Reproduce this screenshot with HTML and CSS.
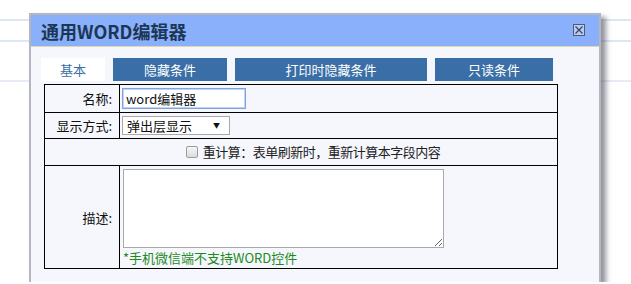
FILE: index.html
```html
<!DOCTYPE html>
<html lang="zh-CN">
<head>
    <meta charset="UTF-8">
    <meta name="viewport" content="width=device-width, initial-scale=1.0">
    <title>通用WORD编辑器</title>
    <link rel="stylesheet" href="styles.css">
</head>
<body>

    <div class="dialog">
        <div class="titlebar">
            <span class="title">通用WORD编辑器</span>
            <span class="close">
                <svg width="12" height="12" viewBox="0 0 12 12">
                    <rect x="0.5" y="0.5" width="11" height="11" fill="#b8ccf6" stroke="#505a78"/>
                    <path d="M2.5 2.5 L9.5 9.5 M9.5 2.5 L2.5 9.5" stroke="#3c4460" stroke-width="1.2"/>
                </svg>
            </span>
        </div>

        <div class="content">
            <div class="tabs">
                <span class="tab active">基本</span>
                <span class="tab w1">隐藏条件</span>
                <span class="tab w2">打印时隐藏条件</span>
                <span class="tab w3">只读条件</span>
            </div>

            <table class="form">
                <tr class="r1">
                    <td class="label">名称:</td>
                    <td><input type="text" class="name" value="word编辑器"></td>
                </tr>
                <tr class="r2">
                    <td class="label">显示方式:</td>
                    <td>
                        <div class="select">
                            <span>弹出层显示</span>
                            <span class="arrow">▼</span>
                        </div>
                    </td>
                </tr>
                <tr class="r3">
                    <td colspan="2" class="check">
                        <label><input type="checkbox" class="box">重计算：表单刷新时，重新计算本字段内容</label>
                    </td>
                </tr>
                <tr class="r4">
                    <td class="label">描述:</td>
                    <td class="desc">
                        <textarea></textarea>
                        <div class="note">*手机微信端不支持WORD控件</div>
                    </td>
                </tr>
            </table>
        </div>
    </div>

</body>
</html>
```

FILE: styles.css
```css
body {
    margin: 0;
    font-family: "Microsoft YaHei", "Noto Sans CJK SC", sans-serif;
    font-size: 13px;
    color: #222;
    background:
        linear-gradient(#dfe6f3, #dfe6f3) 0 19px / 100% 2px no-repeat,
        linear-gradient(#dfe6f3, #dfe6f3) 0 40px / 100% 2px no-repeat,
        linear-gradient(#e6ebf5, #e6ebf5) 0 80px / 100% 2px no-repeat,
        #fff;
    overflow: hidden;
}
.dialog {
    margin: 13px 0 0 29px;
    width: 568px;
    height: 267px;
    border: 2px solid #b6b6be;
    border-bottom: none;
    background: #f5f7fc;
    box-shadow: 5px 4px 5px rgba(60, 60, 80, 0.55);
}
.titlebar {
    height: 31px;
    background: #8ab0fb;
    border-bottom: 1px solid #ddd8b0;
    display: flex;
    align-items: center;
    justify-content: space-between;
    padding: 0 14px 0 10px;
}
.title {
    font-size: 18px;
    font-weight: bold;
    color: #1c3656;
    line-height: 20px;
}
.close {
    display: flex;
    margin-top: -2px;
}
.content {
    padding: 11px 0 0 10px;
}
.tabs {
    display: flex;
    gap: 8px;
    height: 23px;
}
.tab {
    display: flex;
    align-items: center;
    justify-content: center;
    background: #3a6ea6;
    color: #fff;
    line-height: 23px;
}
.tab.active {
    width: 64px;
    background: #fff;
    color: #3a6ea6;
}
.tab.w1 { width: 114px; }
.tab.w2 { width: 192px; }
.tab.w3 { width: 118px; }
.form {
    margin: 3px 0 0 3px;
    width: 514px;
    border-collapse: collapse;
    border: 1px solid #000;
}
.form td {
    border: 1px solid #000;
    padding: 0 0 0 2px;
    line-height: 17px;
}
.form td.label {
    width: 67px;
    padding: 0 7px 0 0;
    text-align: right;
    color: #111;
}
.r1 td { height: 27px; }
.r2 td { height: 25px; }
.r3 td { height: 26px; }
.r4 td { height: 102px; }
.name {
    display: block;
    box-sizing: border-box;
    width: 124px;
    height: 21px;
    margin: 0;
    padding: 0 3px;
    border: 1px solid #7da4dc;
    box-shadow: 0 0 0 1px rgba(150, 185, 235, 0.6) inset;
    font: 13px "Microsoft YaHei", "Noto Sans CJK SC", sans-serif;
    color: #111;
    outline: none;
}
.select {
    box-sizing: border-box;
    width: 108px;
    height: 19px;
    border: 1px solid #a9a9a9;
    background: #fff;
    display: flex;
    align-items: center;
    justify-content: space-between;
    padding: 0 9px 0 4px;
    color: #111;
}
.arrow {
    font-size: 7px;
    color: #111;
}
.check {
    text-align: center;
}
.check label {
    display: inline-flex;
    align-items: center;
    gap: 5px;
    margin-left: 22px;
    letter-spacing: -0.5px;
}
.box {
    appearance: none;
    width: 12px;
    height: 12px;
    margin: 0;
    border: 1px solid #9c9c9c;
    border-radius: 2px;
    background: linear-gradient(#f6f6f6, #dcdcdc);
}
.desc {
    vertical-align: top;
}
.desc textarea {
    display: block;
    box-sizing: border-box;
    width: 321px;
    height: 79px;
    margin: 3px 0 0 1px;
    border: 1px solid #a9a9a9;
    background: #fff;
}
.note {
    margin: 1px 0 0 1px;
    color: #1c8a1c;
}
```
